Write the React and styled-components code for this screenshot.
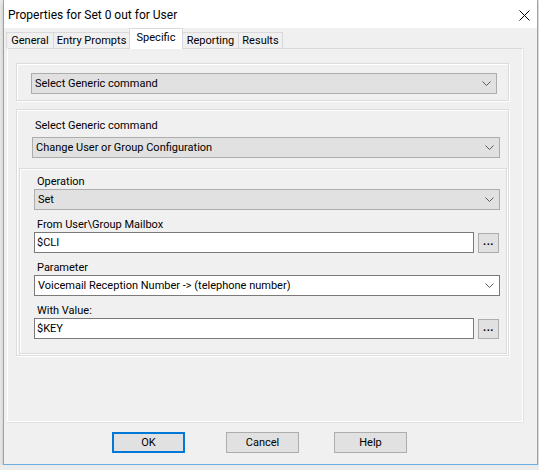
import React from "react";
import styled, { createGlobalStyle } from "styled-components";

const font = `Roboto, "Liberation Sans", Arial, sans-serif`;

const Global = createGlobalStyle`
  html, body { margin: 0; padding: 0; background: #ececec; }
  body { font-family: ${font}; color: #000; }
  * { box-sizing: border-box; }
`;

const Window = styled.div`
  margin-left: 3px;
  width: 535px;
  height: 465px;
  border: 1px solid #6aaee2;
  border-top: none;
  background: #f0f0f0;
  display: flex;
  flex-direction: column;
  box-shadow: 0 2px 5px rgba(0, 0, 0, 0.18);
  font-size: 11px;
`;

const TitleBar = styled.div`
  height: 28px;
  flex: none;
  background: #fff;
  display: flex;
  align-items: center;
  justify-content: space-between;
  padding: 0 7px 0 4px;
`;

const Title = styled.span`
  font-size: 12px;
  line-height: 16px;
  margin-top: 1px;
`;

const CloseIcon = styled.svg`
  width: 11px;
  height: 11px;
  margin-top: 3px;
`;

const TabStrip = styled.div`
  height: 21px;
  flex: none;
  display: flex;
  align-items: flex-end;
  padding-left: 2px;
  margin-bottom: -1px;
  position: relative;
  z-index: 1;
`;

const Tab = styled.div`
  width: ${(p) => p.$w}px;
  height: ${(p) => (p.$active ? 21 : 16)}px;
  margin-bottom: ${(p) => (p.$active ? 0 : 1)}px;
  background: ${(p) => (p.$active ? "#fff" : "#f0f0f0")};
  border: 1px solid #d9d9d9;
  border-bottom: none;
  margin-right: -1px;
  display: flex;
  align-items: center;
  justify-content: center;
  padding-bottom: ${(p) => (p.$active ? 3 : 0)}px;
  line-height: 14px;
  white-space: nowrap;
`;

const Panel = styled.div`
  margin: 0 14px 0 3px;
  height: 374px;
  flex: none;
  border: 1px solid #fff;
  border-top-color: #d9d9d9;
  box-shadow: 0 1px 0 #e2e2e2, 1px 0 0 #e2e2e2;
  padding: 14px 0 0 8px;
`;

const GroupBox = styled.div`
  width: ${(p) => (p.$w ? `${p.$w}px` : "auto")};
  border: 1px solid #dcdcdc;
  box-shadow: inset 1px 1px 0 #fff, 1px 1px 0 #fff;
  padding: ${(p) => p.$pad};
  margin: ${(p) => p.$margin || "0"};
`;

const Label = styled.div`
  height: 14px;
  line-height: 14px;
  padding-left: 3px;
  margin: ${(p) => p.$margin || "8px 0 0 0"};
  white-space: nowrap;
`;

const Combo = styled.div`
  height: 21px;
  display: flex;
  align-items: center;
  justify-content: space-between;
  border: 1px solid ${(p) => (p.$edit ? "#7a7a7a" : "#adadad")};
  background: ${(p) => (p.$edit ? "#fff" : "#e1e1e1")};
  padding: 0 5px 0 3px;
  margin: ${(p) => p.$margin || "0"};
  white-space: nowrap;
`;

const Chevron = styled.svg`
  width: 9px;
  height: 5px;
  flex: none;
`;

const FieldRow = styled.div`
  display: flex;
  align-items: flex-end;
  height: 21px;
`;

const TextBox = styled.div`
  flex: 1;
  height: 21px;
  background: #fff;
  border: 1px solid #7a7a7a;
  display: flex;
  align-items: center;
  padding-left: 2px;
`;

const Ellipsis = styled.div`
  width: 21px;
  height: 20px;
  margin: 0 1px 0 4px;
  background: #e1e1e1;
  border: 1px solid #adadad;
  display: flex;
  align-items: center;
  justify-content: center;
  font-weight: bold;
  font-size: 11px;
  line-height: 10px;
  padding-bottom: 3px;
  letter-spacing: 0.5px;
`;

const ButtonRow = styled.div`
  display: flex;
  margin-top: 10px;
  padding-left: 108px;
`;

const Button = styled.div`
  width: 73px;
  height: 21px;
  margin-left: ${(p) => p.$gap || 0}px;
  background: #e1e1e1;
  border: ${(p) => (p.$default ? "2px solid #0078d7" : "1px solid #adadad")};
  display: flex;
  align-items: center;
  justify-content: center;
`;

const Down = () => (
  <Chevron viewBox="0 0 9 5">
    <path d="M0.5 0.5 L4.5 4.5 L8.5 0.5" fill="none" stroke="#5a5a5a" strokeWidth="1" />
  </Chevron>
);

const tabs = [
  ["General", 48],
  ["Entry Prompts", 77],
  ["Specific", 54, true],
  ["Reporting", 57],
  ["Results", 45],
];

export default function App() {
  return (
    <>
      <Global />
      <Window>
        <TitleBar>
          <Title>Properties for Set 0 out for User</Title>
          <CloseIcon viewBox="0 0 11 11">
            <path d="M0.5 0.5 L10.5 10.5 M10.5 0.5 L0.5 10.5" stroke="#000" strokeWidth="1" />
          </CloseIcon>
        </TitleBar>
        <TabStrip>
          {tabs.map(([t, w, a]) => (
            <Tab key={t} $w={w} $active={a}>
              {t}
            </Tab>
          ))}
        </TabStrip>
        <Panel>
          <GroupBox $w={493} $pad="9px 11px 6px 14px">
            <Combo>
              Select Generic command
              <Down />
            </Combo>
          </GroupBox>
          <GroupBox $w={493} $pad="9px 1px 1px 2px" $margin="8px 0 0 0">
            <Label $margin="0 7px 0 13px">Select Generic command</Label>
            <Combo $margin="4px 7px 0 13px">
              Change User or Group Configuration
              <Down />
            </Combo>
            <GroupBox $pad="6px 6px 14px 14px" $margin="10px 0 0 0">
              <Label $margin="0">Operation</Label>
              <Combo>
                Set
                <Down />
              </Combo>
              <Label>From User\Group Mailbox</Label>
              <FieldRow>
                <TextBox>$CLI</TextBox>
                <Ellipsis>...</Ellipsis>
              </FieldRow>
              <Label>Parameter</Label>
              <Combo $edit>
                Voicemail Reception Number -&gt; (telephone number)
                <Down />
              </Combo>
              <Label>With Value:</Label>
              <FieldRow>
                <TextBox>$KEY</TextBox>
                <Ellipsis>...</Ellipsis>
              </FieldRow>
            </GroupBox>
          </GroupBox>
        </Panel>
        <ButtonRow>
          <Button $default>OK</Button>
          <Button $gap={41}>Cancel</Button>
          <Button $gap={35}>Help</Button>
        </ButtonRow>
      </Window>
    </>
  );
}
